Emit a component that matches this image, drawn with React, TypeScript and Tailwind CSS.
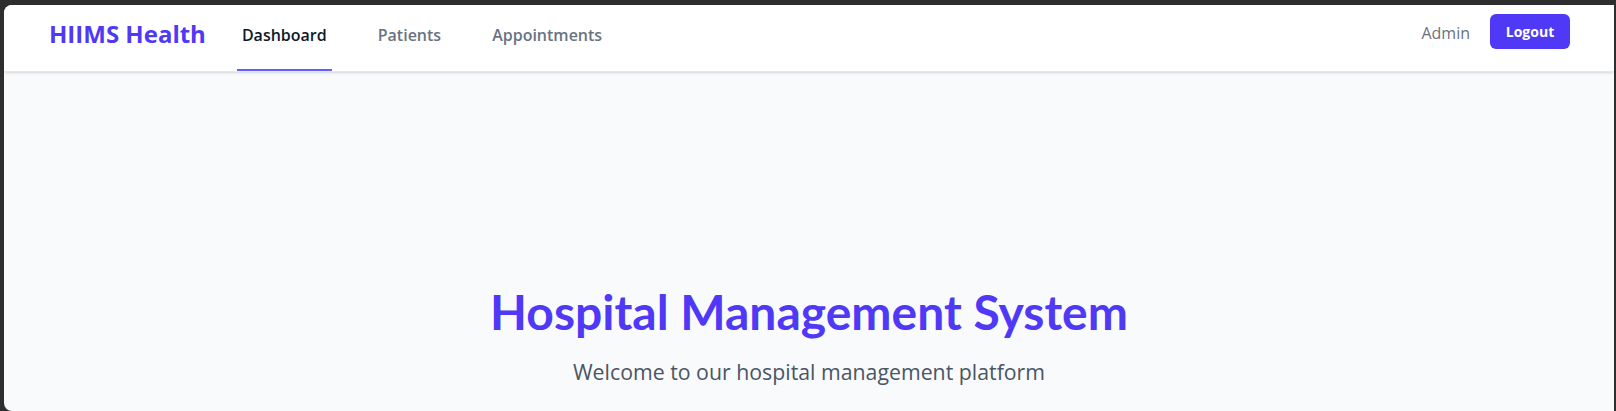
import React from 'react';

// nav links
const links = [
  { label: 'Dashboard', active: true },
  { label: 'Patients', active: false },
  { label: 'Appointments', active: false },
];

export default function App() {
  return (
    <div className="h-[411px] bg-[#2e2e2e] pt-[5px] pl-[4px] pr-[2px] overflow-hidden" style={{ fontFamily: '"Open Sans", "Noto Sans", sans-serif' }}>
      <div className="h-full bg-gray-50 rounded-l-lg overflow-hidden">
        {/* top bar */}
        <nav className="h-[67px] bg-white shadow-sm border-b border-gray-200 flex items-stretch pl-[45px] pr-[44px]">
          <div className="flex items-center pb-[8px]">
            <span className="text-2xl font-bold text-[#4f39f6]">HIIMS Health</span>
          </div>
          <div className="flex items-stretch ml-[31px] gap-[41px]">
            {links.map(link => (
              <a
                key={link.label}
                href="#"
                className={`flex items-center px-[5px] pb-[5px] border-b-2 text-[16px] font-semibold ${
                  link.active
                    ? 'border-[#615fff] text-gray-900'
                    : 'border-transparent text-gray-500'
                }`}
              >
                {link.label}
              </a>
            ))}
          </div>
          <div className="ml-auto flex items-center gap-5 pb-[13px]">
            <span className="pt-[3px] text-base text-gray-500">Admin</span>
            <button className="h-[35px] w-[80px] rounded-md bg-[#4f39f6] text-sm font-bold text-white">
              Logout
            </button>
          </div>
        </nav>

        {/* hero */}
        <div className="flex flex-col items-center pt-[216px]">
          <h1 className="text-5xl font-bold text-[#4f39f6]" style={{ fontFamily: 'Lato, "Open Sans", sans-serif' }}>
            Hospital Management System
          </h1>
          <p className="mt-[22px] text-[21.3px] leading-7 text-gray-600">Welcome to our hospital management platform</p>
        </div>
      </div>
    </div>
  );
}
